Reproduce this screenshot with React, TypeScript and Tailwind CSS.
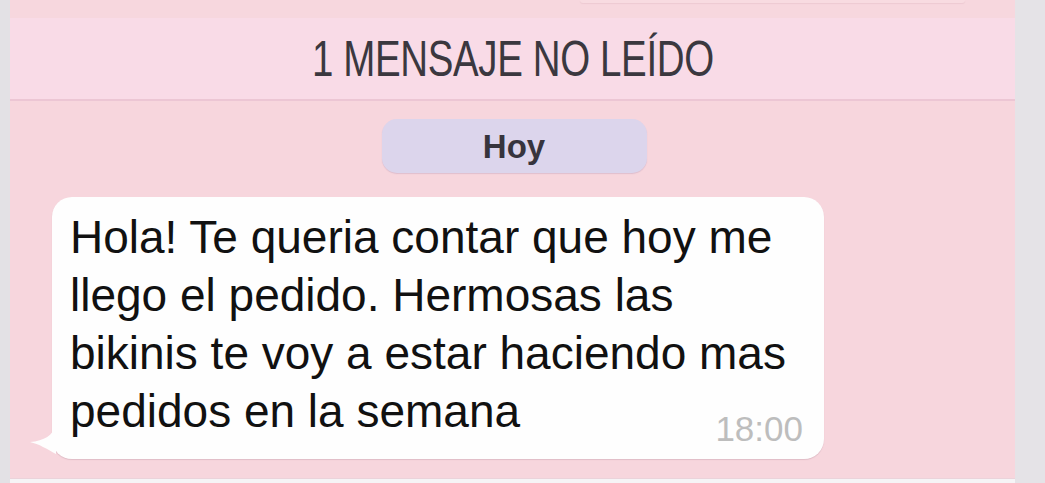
import React from 'react';

const SANS = 'font-["Liberation_Sans","Helvetica_Neue",Arial,sans-serif]';

function BubbleTail() {
  return (
    <svg
      className="absolute left-[-24px] bottom-[5px]"
      width="28"
      height="28"
      viewBox="0 0 28 28"
    >
      <path
        d="M26 0 C26 9 16 15 2 16 C11 18 19 23 28 28 L28 0 Z"
        fill="#fefefe"
      />
    </svg>
  );
}

export default function App() {
  return (
    <div className={`flex h-[483px] w-[1045px] overflow-hidden bg-[#e4e2e6] ${SANS}`}>
      <div className="w-[10px] shrink-0 bg-[#e3e1e5]" />

      <div className="flex w-[1005px] shrink-0 flex-col bg-[#f7d6dd]">
        {/* tail end of the previous bubble */}
        <div className="h-[18px] bg-[#f7d7de]">
          <div className="ml-[570px] h-[3px] w-[385px] rounded-b-[6px] bg-[#f8dbe1] shadow-[0_1px_1px_rgba(180,130,150,0.15)]" />
        </div>

        <div className="flex h-[83px] items-center justify-center border-b-2 border-[#ecc6d4] bg-[#f9dbe7]">
          <span className="inline-block origin-center scale-x-[0.77] text-[50px] leading-none tracking-[-0.5px] text-[#3b383f]">
            1 MENSAJE NO LEÍDO
          </span>
        </div>

        <div className="flex flex-1 flex-col">
          <div className="mt-[18px] flex justify-center pl-[3px]">
            <div className="flex h-[54px] w-[265px] items-center justify-center rounded-[15px] bg-[#dcd5ec] shadow-[0_1px_1px_rgba(150,120,160,0.25)]">
              <span className="text-[33px] font-bold leading-none text-[#37343d]">Hoy</span>
            </div>
          </div>

          <div className="relative ml-[42px] mt-[24px] h-[262px] w-[772px] rounded-[20px] bg-[#fefefe] pl-[18px] pr-[30px] pt-[11px] shadow-[0_1px_1px_rgba(120,80,100,0.18)]">
            <BubbleTail />
            <p className="text-[46px] leading-[58px] text-[#111111]">
              Hola! Te queria contar que hoy me
              <br />
              llego el pedido. Hermosas las
              <br />
              bikinis te voy a estar haciendo mas
              <br />
              pedidos en la semana
            </p>
            <span className="absolute bottom-[13px] right-[21px] text-[35px] leading-none text-[#bdbdbd]">
              18:00
            </span>
          </div>
        </div>

        <div className="h-[5px] border-t border-[#ebd3da] bg-[#f6f4f6]" />
      </div>

      <div className="flex-1 bg-[#e5e3e7]" />
    </div>
  );
}
